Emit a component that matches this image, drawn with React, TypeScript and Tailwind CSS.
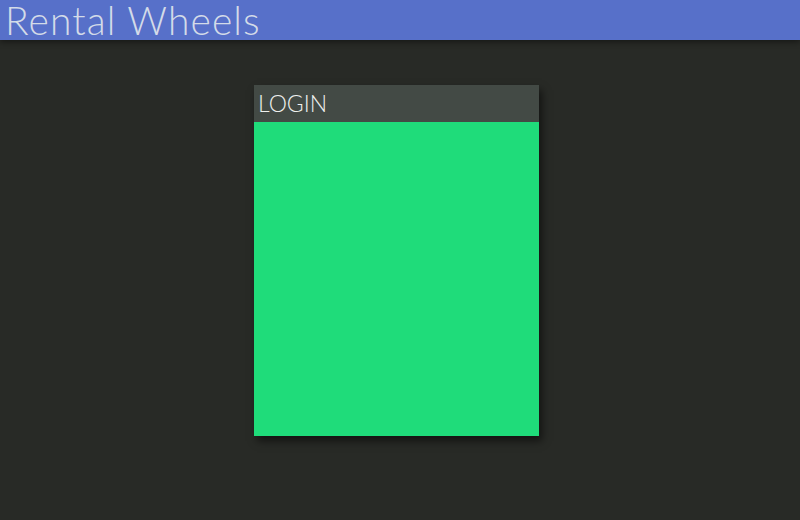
export default function App() {
  return (
    <div
      className="w-[800px] h-[520px] bg-[#282a26] overflow-hidden"
      style={{ fontFamily: "Lato, 'Open Sans', sans-serif" }}
    >
      <header className="h-10 bg-[#5770c9] shadow-[0_2px_6px_rgba(0,0,0,0.45)] relative z-10 flex items-center">
        <h1 className="pl-[5px] text-[39px] font-light leading-[40px] text-[#d3dbe8] tracking-[1.1px] whitespace-nowrap">
          Rental Wheels
        </h1>
      </header>
      <main className="pt-[45px] pl-[254px]">
        <div className="w-[285px] shadow-[3px_5px_8px_rgba(0,0,0,0.55)]">
          <div className="h-[37px] bg-[#434a45] flex items-center pl-1">
            <span className="text-[23px] font-light text-[#eef0ee] leading-none">LOGIN</span>
          </div>
          <div className="h-[314px] bg-[#1fdc7a]" />
        </div>
      </main>
    </div>
  );
}
